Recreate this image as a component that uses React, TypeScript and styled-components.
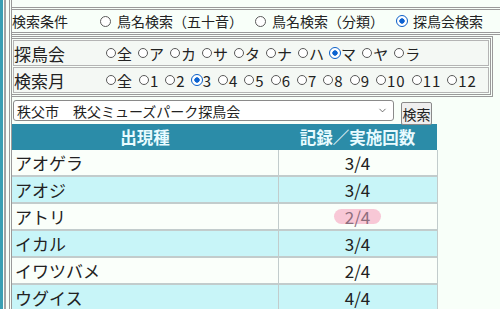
import React from "react";
import styled, { createGlobalStyle } from "styled-components";
import { ChevronDown } from "lucide-react";

const GlobalStyle = createGlobalStyle`
	html, body {
		margin: 0;
		padding: 0;
		background: #f8fff9;
	}
	body {
		font-family: "Noto Sans CJK JP", "Noto Sans", sans-serif;
		color: #222;
	}
`;

const Frame = styled.div`
	display: flex;
	width: 500px;
	height: 309px;
	overflow: hidden;
`;

const TealBar = styled.div`
	width: 3px;
	flex: none;
	background: #3a9fb3;
	margin-right: 1px;
`;

const OuterEdge = styled.div`
	flex: 1;
	min-width: 0;
	border-left: 2px solid #a4a4a4;
	padding-left: 3px;
`;

const Main = styled.div`
	height: 100%;
	border-left: 3px double #9a9a9a;
	padding-top: 7px;
	box-sizing: border-box;
`;

const CondBox = styled.div`
	display: flex;
	align-items: center;
	height: 22px;
	margin-right: -20px;
	border-top: 3px double #9a9a9a;
	border-bottom: 3px double #9a9a9a;
	font-size: 14px;
	white-space: nowrap;
`;

const CondLabel = styled.span`
	width: 88px;
	flex: none;
`;

const Choice = styled.label<{ $gap: number; $tail: number; $spacing?: number }>`
	display: inline-flex;
	align-items: center;
	gap: ${({ $gap }) => $gap}px;
	margin-right: ${({ $tail }) => $tail}px;
	letter-spacing: ${({ $spacing = 0 }) => $spacing}px;
	white-space: nowrap;
`;

const Radio = styled.input.attrs({ type: "radio" })<{ $size: number; $grow: number }>`
	appearance: none;
	margin: 0;
	flex: none;
	width: ${({ $size }) => $size}px;
	height: ${({ $size }) => $size}px;
	border: 1px solid #5a5a5a;
	border-radius: 50%;
	background: #fff;
	box-sizing: border-box;

	&:checked {
		width: ${({ $size, $grow }) => $size + $grow}px;
		height: ${({ $size, $grow }) => $size + $grow}px;
		margin-left: ${({ $grow }) => -Math.floor($grow / 2)}px;
		margin-right: ${({ $grow }) => -Math.ceil($grow / 2)}px;
		border-color: #0a5fc8;
		background: radial-gradient(circle, #0b62d0 0 34%, #fff 42%);
	}
`;

const FilterBox = styled.div`
	width: 476px;
	margin-top: 1px;
	border: 3px double #9a9a9a;
	border-left: none;
	padding: 1px;
	display: flex;
	flex-direction: column;
	gap: 1px;
`;

const FilterRow = styled.div`
	display: flex;
	align-items: center;
	height: 24px;
	border: 1px solid #b4b4b4;
	background: #f4f8f4;
	font-size: 15px;
`;

const FilterLabel = styled.span`
	width: 92px;
	flex: none;
	font-size: 17px;
`;

const SelectRow = styled.div`
	display: flex;
	align-items: flex-start;
	gap: 7px;
	height: 27px;
	padding-left: 1px;
`;

const SelectWrap = styled.span`
	position: relative;
	display: inline-flex;
	margin-top: 3px;
`;

const SiteSelect = styled.select`
	appearance: none;
	width: 381px;
	height: 21px;
	padding: 0 20px 0 3px;
	font-family: inherit;
	font-size: 14px;
	color: #222;
	background: #fff;
	border: 1px solid #8a8a8a;
	border-radius: 3px;
`;

const Chevron = styled(ChevronDown)`
	position: absolute;
	right: 6px;
	top: 5px;
	pointer-events: none;
	color: #333;
`;

const SearchButton = styled.button`
	width: 31px;
	height: 23px;
	margin-top: 5px;
	padding: 0;
	font-family: inherit;
	font-size: 14px;
	color: #222;
	background: #efefef;
	border: 1px solid #8a8a8a;
	border-radius: 2px;
`;

const ResultTable = styled.table`
	width: 425px;
	border-collapse: collapse;
	table-layout: fixed;
`;

const HeadCell = styled.th<{ $w: number }>`
	width: ${({ $w }) => $w}px;
	height: 26px;
	padding: 0;
	background: #2b8ca8;
	color: #e8fbff;
	font-size: 16.5px;
	font-weight: bold;
	text-align: center;
`;

const Row = styled.tr<{ $alt: boolean }>`
	height: 26px;
	background: ${({ $alt }) => ($alt ? "#c8f5f8" : "#fafffa")};
`;

const NameCell = styled.td`
	padding: 0 0 0 3px;
	font-size: 17px;
	border-bottom: 2px solid #c2cccc;
`;

const CountCell = styled.td`
	padding: 0;
	font-size: 17px;
	text-align: center;
	border-bottom: 2px solid #c2cccc;
	border-left: 1px solid #c2cccc;
	border-right: 1px solid #c2cccc;
`;

const Marked = styled.span`
	display: inline-block;
	line-height: 15px;
	padding: 0 11px;
	border-radius: 8px;
	background: #f8c8d6;
	color: #8e6e7e;
`;

const modes = [
	{ label: "鳥名検索（五十音）", checked: false },
	{ label: "鳥名検索（分類）", checked: false },
	{ label: "探鳥会検索", checked: true },
];

const kana = ["全", "ア", "カ", "サ", "タ", "ナ", "ハ", "マ", "ヤ", "ラ"];
const months = ["全", "1", "2", "3", "4", "5", "6", "7", "8", "9", "10", "11", "12"];

const records = [
	{ name: "アオゲラ", count: "3/4" },
	{ name: "アオジ", count: "3/4" },
	{ name: "アトリ", count: "2/4", marked: true },
	{ name: "イカル", count: "3/4" },
	{ name: "イワツバメ", count: "2/4" },
	{ name: "ウグイス", count: "4/4" },
];

export default function App() {
	return (
		<>
			<GlobalStyle />
			<Frame>
				<TealBar />
				<OuterEdge>
					<Main>
						<CondBox>
							<CondLabel>検索条件</CondLabel>
							{modes.map(m => (
								<Choice key={m.label} $gap={6} $tail={12}>
									<Radio $size={11} $grow={1} name="mode" defaultChecked={m.checked} />
									{m.label}
								</Choice>
							))}
						</CondBox>

						<FilterBox>
							<FilterRow>
								<FilterLabel>探鳥会</FilterLabel>
								{kana.map(k => (
									<Choice key={k} $gap={1} $tail={6}>
										<Radio $size={10} $grow={2} name="kana" defaultChecked={k === "マ"} />
										{k}
									</Choice>
								))}
							</FilterRow>
							<FilterRow>
								<FilterLabel>検索月</FilterLabel>
								{months.map(m => (
									<Choice key={m} $gap={1} $tail={6} $spacing={1}>
										<Radio $size={10} $grow={2} name="month" defaultChecked={m === "3"} />
										{m}
									</Choice>
								))}
							</FilterRow>
						</FilterBox>

						<SelectRow>
							<SelectWrap>
								<SiteSelect defaultValue="muse">
									<option value="muse">秩父市　秩父ミューズパーク探鳥会</option>
								</SiteSelect>
								<Chevron size={11} strokeWidth={1.5} />
							</SelectWrap>
							<SearchButton>検索</SearchButton>
						</SelectRow>

						<ResultTable>
							<thead>
								<tr>
									<HeadCell $w={266}>出現種</HeadCell>
									<HeadCell $w={159}>記録／実施回数</HeadCell>
								</tr>
							</thead>
							<tbody>
								{records.map((r, i) => (
									<Row key={r.name} $alt={i % 2 === 1}>
										<NameCell>{r.name}</NameCell>
										<CountCell>{r.marked ? <Marked>{r.count}</Marked> : r.count}</CountCell>
									</Row>
								))}
							</tbody>
						</ResultTable>
					</Main>
				</OuterEdge>
			</Frame>
		</>
	);
}
